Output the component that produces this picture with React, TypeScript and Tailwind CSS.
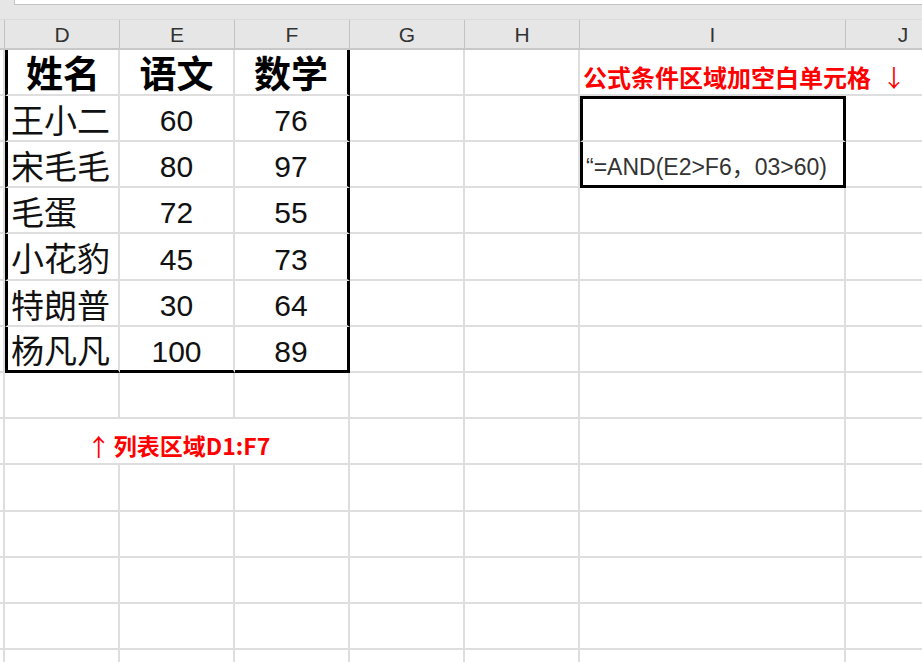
import React from "react";

type Side = "g" | "k" | "n";

interface CellSpec {
  text?: string;
  kind?: "head" | "name" | "num" | "note" | "note2" | "formula";
  align?: "left" | "center";
  arrow?: "up" | "down";
  r?: Side;
  b?: Side;
  l?: boolean;
  t?: boolean;
}

const colWidths = ["w-[115px]", "w-[115px]", "w-[115px]", "w-[115px]", "w-[115px]", "w-[266px]", "w-[115px]"];
const letters = ["D", "E", "F", "G", "H", "I", "J"];
const rowHeights = [46, 46, 46, 46, 47, 46, 46, 46, 46, 47, 46, 46, 46, 46];

const table = [
  ["姓名", "语文", "数学"],
  ["王小二", "60", "76"],
  ["宋毛毛", "80", "97"],
  ["毛蛋", "72", "55"],
  ["小花豹", "45", "73"],
  ["特朗普", "30", "64"],
  ["杨凡凡", "100", "89"],
];

function buildRow(r: number): CellSpec[] {
  const cells: CellSpec[] = letters.map(() => ({ r: "g", b: "g" }));
  if (r < 7) {
    const row = table[r];
    cells[0] = { text: row[0], kind: r === 0 ? "head" : "name", align: r === 0 ? "center" : "left", r: "g", b: r === 6 ? "k" : "g", l: true };
    cells[1] = { text: row[1], kind: r === 0 ? "head" : "num", align: "center", r: "g", b: r === 6 ? "k" : "g" };
    cells[2] = { text: row[2], kind: r === 0 ? "head" : "num", align: "center", r: "k", b: r === 6 ? "k" : "g" };
  }
  if (r === 0) {
    cells[5] = { text: "公式条件区域加空白单元格", arrow: "down", kind: "note", align: "left", r: "n", b: "g" };
  }
  if (r === 1) {
    cells[5] = { r: "k", b: "g", l: true, t: true };
  }
  if (r === 2) {
    cells[5] = { text: "“=AND(E2>F6，03>60)", kind: "formula", align: "left", r: "k", b: "k", l: true };
  }
  if (r === 8) {
    cells[0] = { r: "n", b: "g" };
    cells[1] = { text: "列表区域D1:F7", arrow: "up", kind: "note2", align: "center", r: "n", b: "g" };
  }
  return cells;
}

function sideClasses(c: CellSpec) {
  const list: string[] = [];
  if (c.r === "g") list.push("border-r-2 border-r-[#dedede]");
  if (c.r === "k") list.push("border-r-[3px] border-r-black");
  if (c.b === "g") list.push("border-b-2 border-b-[#dedede]");
  if (c.b === "k") list.push("border-b-[3px] border-b-black");
  if (c.l) list.push("border-l-[3px] border-l-black");
  if (c.t) list.push("border-t-[3px] border-t-black");
  return list.join(" ");
}

function textClasses(kind: CellSpec["kind"]) {
  switch (kind) {
    case "head":
      return "text-[37px] font-bold text-black pt-[6px]";
    case "name":
      return "text-[33px] text-[#111] pl-[3px] pt-[6px]";
    case "num":
      return "text-[30px] text-[#111] pt-[6px]";
    case "note":
      return "text-[24px] font-bold text-[#ff0000] pl-[3px] pt-[9px]";
    case "note2":
      return "text-[23px] font-bold text-[#ff0000] pt-[9px] pl-[2px]";
    case "formula":
      return "text-[23px] text-[#333] pl-[3px] pt-[8px]";
    default:
      return "";
  }
}

function Cell({ spec, width }: { spec: CellSpec; width: string }) {
  const isNote = spec.kind === "note" || spec.kind === "note2";
  return (
    <div
      className={`${width} h-full shrink-0 flex items-center ${spec.align === "center" ? "justify-center" : "justify-start"} ${sideClasses(spec)}`}
    >
      {spec.text && (
        <span className={`whitespace-nowrap leading-none flex items-center ${textClasses(spec.kind)}`}>
          {spec.arrow === "up" && (
            <span className="font-normal font-['Noto_Sans_CJK_SC',sans-serif] text-[24px] mr-[3px]">↑</span>
          )}
          {isNote ? (
            <span className="font-['Noto_Sans_CJK_SC','Liberation_Sans',sans-serif]">{spec.text}</span>
          ) : (
            spec.text
          )}
          {spec.arrow === "down" && (
            <span className="font-normal font-['Noto_Sans_CJK_SC',sans-serif] text-[24px] ml-[11px]">↓</span>
          )}
        </span>
      )}
    </div>
  );
}

export default function App() {
  return (
    <div className="w-[922px] h-[662px] overflow-hidden bg-white font-['Liberation_Sans','Noto_Sans_CJK_SC',sans-serif]">
      {/* formula bar edge */}
      <div className="h-[5px] bg-[#e6e6e6] flex">
        <div className="w-[14px] shrink-0" />
        <div className="flex-1 bg-white border-l border-b border-[#c4c4c4]" />
      </div>
      <div className="h-[15px] bg-[#e6e6e6] border-b border-[#dadada]" />

      {/* column letters */}
      <div className="h-[30px] flex bg-[#e6e6e6] border-b-2 border-[#c8c8c8]">
        <div className="w-[5px] shrink-0 border-r border-[#c2c2c2]" />
        {letters.map((l, i) => (
          <div
            key={l}
            className={`${colWidths[i]} shrink-0 flex items-center justify-center pt-[2px] border-r border-[#c2c2c2] text-[21px] text-[#333]`}
          >
            {l}
          </div>
        ))}
      </div>

      {/* sheet body */}
      {rowHeights.map((h, r) => (
        <div key={r} className={`flex ${h === 47 ? "h-[47px]" : "h-[46px]"}`}>
          <div className="w-[5px] shrink-0 h-full border-r-2 border-r-[#dedede] border-b-2 border-b-[#dedede]" />
          {buildRow(r).map((spec, i) => (
            <Cell key={i} spec={spec} width={colWidths[i]} />
          ))}
        </div>
      ))}
    </div>
  );
}
